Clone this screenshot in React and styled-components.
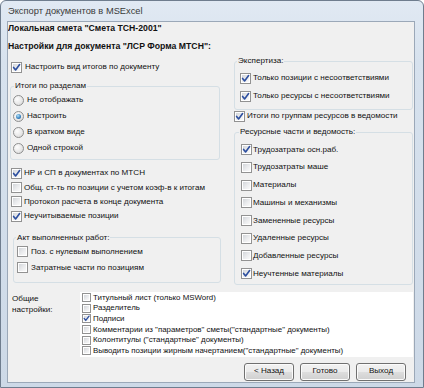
import React from 'react';
import styled, { createGlobalStyle } from 'styled-components';

const GlobalStyle = createGlobalStyle`
  html, body { margin: 0; padding: 0; background: #ffffff; }
  body { font-family: "Liberation Sans", Arial, sans-serif; }
  * { box-sizing: border-box; }
`;

const Window = styled.div`
  width: 424px;
  height: 388px;
  border: 1px solid #6f7d8e;
  border-radius: 6px 6px 0 0;
  background: linear-gradient(to bottom, #e1e9f3 0, #d7e2ee 60px, #cdd9e7 100%);
  padding: 0 8px 4px 6px;
  display: flex;
  flex-direction: column;
`;

const TitleBar = styled.div`
  height: 20px;
  display: flex;
  align-items: center;
  padding-left: 1px;
  font-size: 9.3px;
  color: #3a3a3a;
`;

const Client = styled.div`
  flex: 1;
  background: #f0f0f0;
  border: 1px solid #9ba8b8;
  display: flex;
  flex-direction: column;
  font-size: 8.1px;
  color: #111;
  overflow: hidden;
`;

const Heading = styled.div`
  font-weight: bold;
  font-size: 8.7px;
  line-height: 12px;
  margin-top: ${p => p.$mt || 0}px;
  white-space: nowrap;
`;

const Columns = styled.div`
  display: grid;
  grid-template-columns: 216px 1fr;
  align-items: start;
`;

const Column = styled.div`
  display: flex;
  flex-direction: column;
  align-items: flex-start;
  padding-left: ${p => p.$pl || 0}px;
`;

const Row = styled.div`
  display: flex;
  align-items: center;
  height: ${p => p.$h}px;
  padding-left: ${p => p.$pl || 0}px;
  gap: ${p => (p.$gap ?? 3)}px;
  margin-top: ${p => p.$mt || 0}px;
  white-space: nowrap;
  line-height: 1;
  font-size: ${p => (p.$fs ? `${p.$fs}px` : 'inherit')};
`;

const Box = styled.span`
  position: relative;
  flex: none;
  width: ${p => p.$s}px;
  height: ${p => p.$s}px;
  border: 1px solid #929292;
  background: #ffffff;
  padding: 1px;
  display: flex;
`;

const BoxFill = styled.span`
  flex: 1;
  background: linear-gradient(135deg, #d3d6da 0%, #ebecee 55%, #f9f9f9 100%);
`;

const Mark = styled.svg`
  position: absolute;
  left: -1px;
  top: -1px;
  overflow: visible;
`;

const RadioCircle = styled.span`
  flex: none;
  width: 11px;
  height: 11px;
  border-radius: 50%;
  border: 1px solid #8e8f8f;
  background: radial-gradient(circle at 35% 35%, #fdfdfd 0%, #eaeaea 50%, #d2d2d2 100%);
  display: flex;
  align-items: center;
  justify-content: center;
`;

const RadioDot = styled.span`
  width: 5px;
  height: 5px;
  border-radius: 50%;
  background: radial-gradient(circle at 40% 35%, #b7e3f7 0%, #3b86c4 55%, #1b4f86 100%);
`;

const Group = styled.fieldset`
  margin: ${p => p.$mt || 0}px 0 0 ${p => p.$ml || 0}px;
  width: ${p => p.$w}px;
  min-width: 0;
  border: 1px solid #d5dfe5;
  border-radius: 3px;
  padding: ${p => p.$pt || 0}px 0 ${p => p.$pb || 0}px ${p => p.$pl || 0}px;
`;

const Legend = styled.legend`
  padding: 0 1px;
  margin-left: ${p => p.$ml || 0}px;
  height: 12px;
  line-height: 12px;
  white-space: nowrap;
`;

const Bottom = styled.div`
  display: flex;
  margin-top: 7px;
`;

const SideLabel = styled.div`
  width: 72px;
  padding: 1px 0 0 4px;
  line-height: 11px;
`;

const ListPanel = styled.div`
  width: 333px;
  height: 65px;
  background: #ffffff;
  padding-top: 1px;
`;

const Buttons = styled.div`
  display: flex;
  justify-content: flex-end;
  gap: 6px;
  margin-top: 6px;
  padding-right: 8px;
`;

const Button = styled.button`
  width: 50px;
  height: 18px;
  border: 1px solid #707070;
  border-radius: 3px;
  background: linear-gradient(to bottom, #f2f2f2 0%, #ebebeb 48%, #dddddd 52%, #cfcfcf 100%);
  box-shadow: inset 0 0 0 1px #fbfbfb;
  font-family: inherit;
  font-size: 8.1px;
  color: #111;
  padding: 0;
  line-height: 1;
`;

function Check({ checked, size = 11 }) {
  return (
    <Box $s={size}>
      <BoxFill />
      {checked && (
        <Mark width={size} height={size} viewBox="0 0 11 11">
          <path d="M2.6 5.4 L4.6 7.9 L8.6 2.6" fill="none" stroke="#2d4f9f" strokeWidth="1.6" strokeLinecap="round" strokeLinejoin="round" />
        </Mark>
      )}
    </Box>
  );
}

function CheckRow({ label, checked, h, pl, gap, mt, size, fs }) {
  return (
    <Row $h={h} $pl={pl} $gap={gap} $mt={mt} $fs={fs}>
      <Check checked={checked} size={size} />
      <span>{label}</span>
    </Row>
  );
}

function RadioRow({ label, checked }) {
  return (
    <Row $h={16} $pl={2} $gap={3}>
      <RadioCircle>{checked && <RadioDot />}</RadioCircle>
      <span>{label}</span>
    </Row>
  );
}

const radios = [
  ['Не отображать', false],
  ['Настроить', true],
  ['В кратком виде', false],
  ['Одной строкой', false],
];

const leftChecks = [
  ['НР и СП в документах по МТСН', true],
  ['Общ. ст-ть по позиции с учетом коэф-в к итогам', false],
  ['Протокол расчета в конце документа', false],
  ['Неучитываемые позиции', true],
];

const resources = [
  ['Трудозатраты осн.раб.', true],
  ['Трудозатраты машe', false],
  ['Материалы', false],
  ['Машины и механизмы', false],
  ['Замененные ресурсы', false],
  ['Удаленные ресурсы', false],
  ['Добавленные ресурсы', false],
  ['Неучтенные материалы', true],
];

const general = [
  ['Титульный лист (только MSWord)', false],
  ['Разделитель', false],
  ['Подписи', true],
  ['Комментарии из "параметров" сметы("стандартные" документы)', false],
  ['Колонтитулы ("стандартные" документы)', false],
  ['Выводить позиции жирным начертанием("стандартные" документы)', false],
];

export default function App() {
  return (
    <>
      <GlobalStyle />
      <Window>
        <TitleBar>Экспорт документов в MSExcel</TitleBar>
        <Client>
          <Heading>Локальная смета "Смета ТСН-2001"</Heading>
          <Heading $mt={6}>Настройки для документа "ЛСР Форма МТСН":</Heading>
          <Columns>
            <Column>
              <CheckRow label="Настроить вид итогов по документу" checked h={12} pl={3} mt={9} />
              <Group $mt={7} $ml={2} $w={210} $pb={3}>
                <Legend $ml={3}>Итоги по разделам</Legend>
                {radios.map(([l, c]) => (
                  <RadioRow key={l} label={l} checked={c} />
                ))}
              </Group>
              <Row $h={6} />
              {leftChecks.map(([l, c]) => (
                <CheckRow key={l} label={l} checked={c} h={14.4} pl={3} gap={2} />
              ))}
              <Group $mt={8} $ml={5} $w={208} $pb={6}>
                <Legend $ml={2}>Акт выполненных работ:</Legend>
                <CheckRow label="Поз. с нулевым выполнением" h={16} pl={3} />
                <CheckRow label="Затратные части по позициям" h={16} pl={3} />
              </Group>
            </Column>
            <Column $pl={10}>
              <Group $mt={3} $w={179} $pt={2} $pb={4}>
                <Legend $ml={2}>Экспертиза:</Legend>
                <CheckRow label="Только позиции с несоответствиями" checked h={18} pl={5} gap={2} />
                <CheckRow label="Только ресурсы с несоответствиями" checked h={18} pl={5} gap={2} />
              </Group>
              <CheckRow label="Итоги по группам ресурсов в ведомости" checked h={12} gap={2} />
              <Group $mt={4} $w={179} $pt={3} $pb={1}>
                <Legend $ml={4}>Ресурсные части и ведомость:</Legend>
                {resources.map(([l, c]) => (
                  <CheckRow key={l} label={l} checked={c} h={17.7} pl={6} gap={1} />
                ))}
              </Group>
            </Column>
          </Columns>
          <Bottom>
            <SideLabel>
              Общие
              <br />
              настройки:
            </SideLabel>
            <ListPanel>
              {general.map(([l, c]) => (
                <CheckRow key={l} label={l} checked={c} h={10.6} pl={2} gap={2} size={9} fs={7.9} />
              ))}
            </ListPanel>
          </Bottom>
          <Buttons>
            <Button>&lt; Назад</Button>
            <Button>Готово</Button>
            <Button>Выход</Button>
          </Buttons>
        </Client>
      </Window>
    </>
  );
}
